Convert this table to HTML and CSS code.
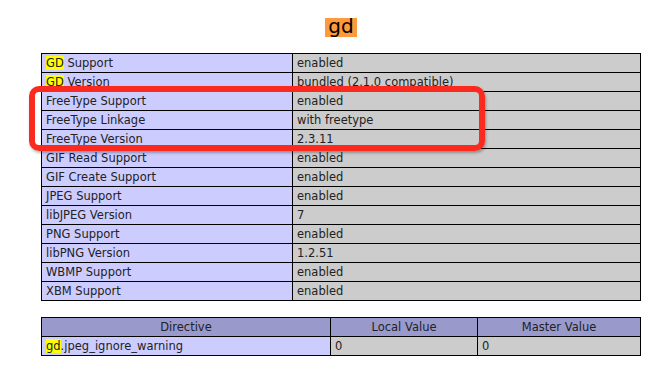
FILE: index.html
```html
<!DOCTYPE html>
<html>
<head>
<meta charset="utf-8">
<link rel="stylesheet" href="styles.css">
</head>
<body>
<div class="page">
  <h2 class="title"><span class="hl-cur">gd</span></h2>
  <table class="info">
    <tr><td class="e"><span class="hl">GD</span> Support</td><td class="v">enabled</td></tr>
    <tr><td class="e"><span class="hl">GD</span> Version</td><td class="v">bundled (2.1.0 compatible)</td></tr>
    <tr><td class="e">FreeType Support</td><td class="v">enabled</td></tr>
    <tr><td class="e">FreeType Linkage</td><td class="v">with freetype</td></tr>
    <tr><td class="e">FreeType Version</td><td class="v">2.3.11</td></tr>
    <tr><td class="e">GIF Read Support</td><td class="v">enabled</td></tr>
    <tr><td class="e">GIF Create Support</td><td class="v">enabled</td></tr>
    <tr><td class="e">JPEG Support</td><td class="v">enabled</td></tr>
    <tr><td class="e">libJPEG Version</td><td class="v">7</td></tr>
    <tr><td class="e">PNG Support</td><td class="v">enabled</td></tr>
    <tr><td class="e">libPNG Version</td><td class="v">1.2.51</td></tr>
    <tr><td class="e">WBMP Support</td><td class="v">enabled</td></tr>
    <tr><td class="e">XBM Support</td><td class="v">enabled</td></tr>
  </table>
  <table class="info dir">
    <tr class="h"><th class="c1">Directive</th><th class="c2">Local Value</th><th class="c3">Master Value</th></tr>
    <tr><td class="e"><span class="hl">gd</span>.jpeg_ignore_warning</td><td class="v">0</td><td class="v">0</td></tr>
  </table>
  <div class="annot"></div>
</div>
</body>
</html>
```
FILE: styles.css
```css
html, body {
  margin: 0;
  padding: 0;
  background: #ffffff;
}
body {
  font-family: "DejaVu Sans", sans-serif;
  color: #222222;
}
.page {
  position: relative;
  padding: 0 0 0 41px;
  width: 600px;
}
.title {
  margin: 0;
  padding-top: 17px;
  height: 36px;
  box-sizing: border-box;
  text-align: center;
  font-size: 20px;
  font-weight: normal;
  line-height: 19px;
}
.hl-cur {
  background: #fe9a3c;
  color: #000;
  padding: 0 3px;
  display: inline-block;
  height: 19px;
  line-height: 16px;
}
.info {
  border-collapse: collapse;
  width: 600px;
  margin-top: 17px;
}
.info:first-of-type {
  margin-top: 17px;
}
.dir {
  margin-top: 16px;
}
td, th {
  border: 1px solid #000;
  font-size: 11.5px;
  line-height: 18px;
  height: 18px;
  padding: 0 4px;
  white-space: nowrap;
}
.e {
  background: #ccccff;
  width: 242px;
}
.v {
  background: #cccccc;
}
.h th {
  background: #9999cc;
  font-weight: normal;
  text-align: center;
}
.dir .c1 { width: 280px; }
.dir .c2 { width: 138px; }
.dir .e { width: 280px; }
.hl {
  background: #ffff00;
}
.annot {
  position: absolute;
  left: 29px;
  top: 86px;
  width: 456px;
  height: 65px;
  box-sizing: border-box;
  border: 6px solid #fb2a1e;
  border-radius: 10px;
  box-shadow: 1px 2px 3px rgba(0,0,0,0.3);
}
```
